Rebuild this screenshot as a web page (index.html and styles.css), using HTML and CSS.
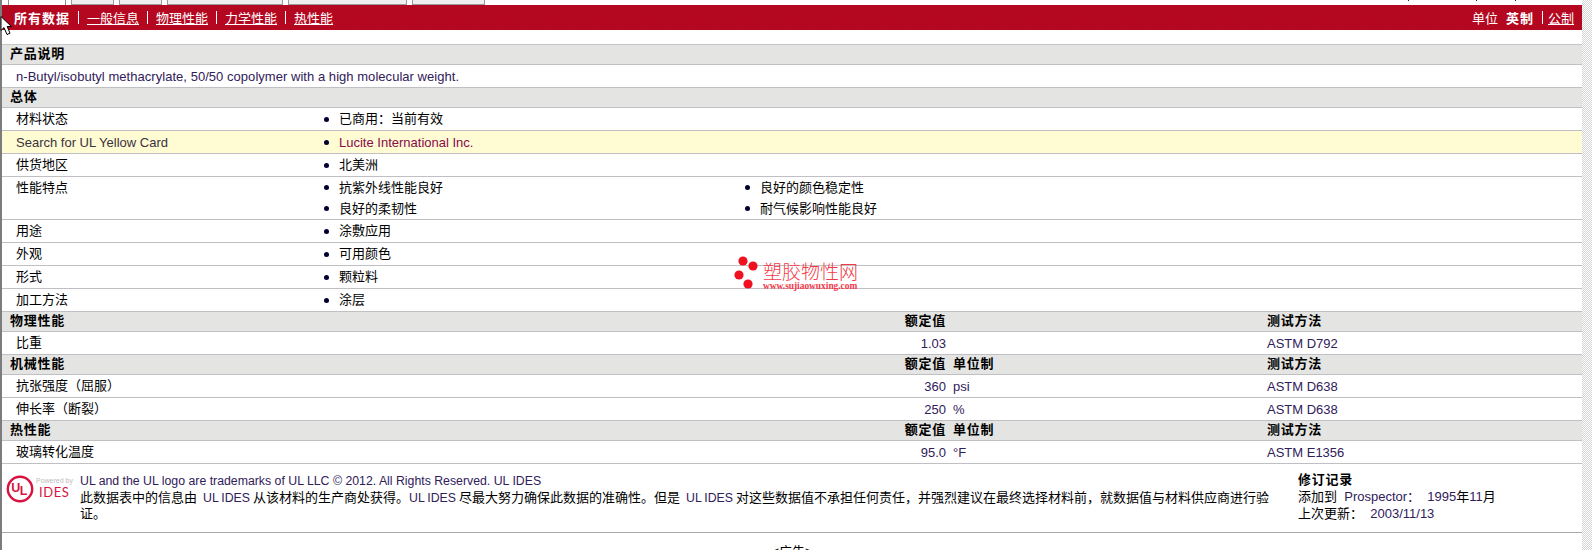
FILE: index.html
```html
<!DOCTYPE html>
<html lang="zh">
<head>
<meta charset="utf-8">
<title>材料数据表</title>
<link rel="stylesheet" href="styles.css">
</head>
<body>
<div class="page">
  <div class="edge"></div>
  <main class="main">
    <div class="tabs">
      <span class="tab tab-a"></span>
      <span class="tab tab-b"></span>
      <span class="tab tab-c"></span>
      <span class="tab tab-d"></span>
      <span class="tab tab-e"></span>
      <span class="tab tab-f"></span>
      <span class="mark mark-a"></span>
      <span class="mark mark-b"></span>
      <span class="mark mark-c"></span>
    </div>
    <nav class="redbar">
      <div class="navlist">
        <b>所有数据</b><i class="pipe"></i><a href="#">一般信息</a><i class="pipe"></i><a href="#">物理性能</a><i class="pipe"></i><a href="#">力学性能</a><i class="pipe"></i><a href="#">热性能</a>
      </div>
      <div class="units">
        <span>单位</span><b>英制</b><i class="pipe"></i><a href="#">公制</a>
      </div>
    </nav>

    <section class="sheet">
      <div class="head">产品说明</div>
      <div class="row"><span class="label latin desc">n-Butyl/isobutyl methacrylate, 50/50 copolymer with a high molecular weight.</span></div>

      <div class="head">总体</div>
      <div class="row info"><span class="label">材料状态</span><ul class="bul"><li>已商用：当前有效</li></ul></div>
      <div class="row info yellow"><span class="label latin">Search for UL Yellow Card</span><ul class="bul"><li class="link">Lucite International Inc.</li></ul></div>
      <div class="row info"><span class="label">供货地区</span><ul class="bul"><li>北美洲</li></ul></div>
      <div class="row info tall"><span class="label">性能特点</span>
        <ul class="bul"><li>抗紫外线性能良好</li><li>良好的颜色稳定性</li><li>良好的柔韧性</li><li>耐气候影响性能良好</li></ul></div>
      <div class="row info"><span class="label">用途</span><ul class="bul"><li>涂敷应用</li></ul></div>
      <div class="row info"><span class="label">外观</span><ul class="bul"><li>可用颜色</li></ul></div>
      <div class="row info"><span class="label">形式</span><ul class="bul"><li>颗粒料</li></ul></div>
      <div class="row info"><span class="label">加工方法</span><ul class="bul"><li>涂层</li></ul></div>

      <div class="head data"><span>物理性能</span><span class="val">额定值</span><span></span><span>测试方法</span></div>
      <div class="row data"><span class="label">比重</span><span class="val latin">1.03</span><span></span><span class="latin">ASTM D792</span></div>

      <div class="head data"><span>机械性能</span><span class="val">额定值</span><span>单位制</span><span>测试方法</span></div>
      <div class="row data"><span class="label">抗张强度（屈服）</span><span class="val latin">360</span><span class="latin">psi</span><span class="latin">ASTM D638</span></div>
      <div class="row data"><span class="label">伸长率（断裂）</span><span class="val latin">250</span><span class="latin">%</span><span class="latin">ASTM D638</span></div>

      <div class="head data"><span>热性能</span><span class="val">额定值</span><span>单位制</span><span>测试方法</span></div>
      <div class="row data"><span class="label">玻璃转化温度</span><span class="val latin">95.0</span><span class="latin">°F</span><span class="latin">ASTM E1356</span></div>
    </section>

    <footer class="foot">
      <div class="logo">
        <svg class="ul" viewBox="0 0 28 28" width="28" height="28" aria-hidden="true">
          <circle cx="14" cy="14" r="12.2" fill="none" stroke="#d8133f" stroke-width="2.4"/>
          <text class="ul-t" x="9.8" y="16.5">U</text>
          <text class="ul-t" x="17.6" y="20">L</text>
        </svg>
        <div class="logo-words"><span class="powered">Powered by</span><span class="ides">IDES</span></div>
      </div>
      <div class="legal">
        <p class="latin">UL and the UL logo are trademarks of UL LLC © 2012. All Rights Reserved. UL IDES</p>
        <p class="legal-body">此数据表中的信息由 <span class="latin">&nbsp;UL IDES</span> 从该材料的生产商处获得。<span class="latin">UL IDES</span> 尽最大努力确保此数据的准确性。但是 <span class="latin">&nbsp;UL IDES</span> 对这些数据值不承担任何责任，并强烈建议在最终选择材料前，就数据值与材料供应商进行验证。</p>
      </div>
      <div class="rev">
        <b>修订记录</b>
        <p>添加到 <span class="latin">&nbsp;Prospector：&nbsp; 1995</span>年<span class="latin">11</span>月</p>
        <p>上次更新：<span class="latin">&nbsp; 2003/11/13</span></p>
      </div>
    </footer>
    <div class="ad">&lt;广告&gt;</div>
  </main>
  <div class="strip"></div>

  <div class="watermark">
    <svg class="wm-dots" viewBox="0 0 26 34" width="26" height="34" aria-hidden="true">
      <circle cx="9" cy="5" r="4.6"/><circle cx="19" cy="10" r="4.6"/><circle cx="5" cy="19" r="4.6"/><circle cx="14" cy="28" r="4.6"/>
    </svg>
    <div class="wm-text"><span class="wm-cn">塑胶物性网</span><span class="wm-url">www.sujiaowuxing.com</span></div>
  </div>

  <svg class="cursor" viewBox="0 0 12 20" width="12" height="20" aria-hidden="true">
    <path d="M1 .5V14.5L4 11.6L7 18.5L10 17.2L7.2 10.5H11.4Z" fill="#fff" stroke="#000" stroke-width="1"/>
  </svg>
</div>
</body>
</html>
```

FILE: styles.css
```css
* { box-sizing: border-box; }
html, body { margin: 0; padding: 0; background: #fff; }
body {
  font-family: "Liberation Sans", "Noto Sans CJK SC", sans-serif;
  font-size: 13px;
  color: #000;
}
p, ul { margin: 0; padding: 0; }
a { color: inherit; }

.page { position: relative; display: flex; width: 1592px; height: 550px; overflow: hidden; }
.edge { flex: 0 0 2px; background: #7c7c7c; }
.main { flex: 0 0 1580px; width: 1580px; }
.strip {
  flex: 0 0 10px;
  background-color: #fff;
  background-image: conic-gradient(#d4d4d4 25%, #fff 0 50%, #d4d4d4 0 75%, #fff 0);
  background-size: 2px 2px;
}

.tabs { display: flex; height: 5px; padding-left: 6px; gap: 5px; }
.tab { height: 5px; background: #efefef; border: 1px solid #9a9a9a; border-top: 0; }
.tab-a { width: 58px; background: #fff; border-color: #fff #8f8f8f; border-bottom: 0; }
.tab-b { width: 43px; }
.tab-c { width: 43px; }
.tab-d { width: 116px; }
.tab-e { width: 119px; }
.tab-f { width: 73px; }
.mark { width: 1px; height: 1px; background: #222; }
.mark-a { margin-left: 918px; }
.mark-b { margin-left: 62px; }
.mark-c { margin-left: 33px; }

.redbar {
  display: flex;
  justify-content: space-between;
  align-items: center;
  height: 25px;
  padding: 0 8px 0 12px;
  color: #fff;
  background-color: #b5071f;
  background-image: radial-gradient(circle, #a90a22 .6px, transparent .7px);
  background-size: 3px 3px;
}
.redbar b { letter-spacing: 1px; }
.navlist, .units { display: flex; align-items: center; gap: 8px; }
.units .pipe { margin-right: -3px; }
.pipe { display: block; width: 1px; height: 13px; background: #fff; }

.sheet { margin-top: 14px; border-top: 1px solid #c6c6c6; }
.head, .row { border-bottom: 1px solid #bfbfc4; }
.head {
  height: 20px;
  line-height: 18px;
  padding-left: 8px;
  font-weight: 700;
  letter-spacing: .75px;
  background-color: #e4e4e2;
  background-image: radial-gradient(circle, #ececea .6px, transparent .7px);
  background-size: 4px 6px;
}
.row { height: 23px; line-height: 22px; padding-left: 14px; }
.latin { color: #30205a; }
.row .latin { padding-top: 1px; }
.desc { letter-spacing: .04px; }
.label { display: block; }
.yellow { background: #fffbd3; }
.yellow .latin { color: #3a3340; }

.info { display: grid; grid-template-columns: 308px 1fr; }
.tall { height: 43px; }
.bul { display: grid; grid-template-columns: 421px 421px; list-style: none; }
.bul li { display: flex; align-items: center; gap: 10px; height: 22px; }
.tall .bul li { height: 21px; }
.bul li::before {
  content: "";
  flex: 0 0 5px;
  width: 5px;
  height: 5px;
  border-radius: 50%;
  background: #000030;
}
.bul .link { color: #8a0a4c; padding-top: 1px; }

.data { display: grid; }
.head.data { grid-template-columns: 890px 46px 321px 320px; }
.row.data { grid-template-columns: 884px 46px 321px 320px; }
.val { text-align: right; }
.data > :nth-child(3) { padding-left: 7px; }

.foot {
  display: grid;
  grid-template-columns: 78px 1195px 1fr;
  height: 69px;
  border-bottom: 1px solid #aaa;
}
.logo { display: flex; padding: 11px 0 0 4px; gap: 2px; }
.ul { flex: 0 0 28px; }
.ul-t { font-family: "Liberation Sans", sans-serif; font-weight: 700; font-size: 12.5px; text-anchor: middle; fill: #d8133f; }
.logo-words { display: flex; flex-direction: column; }
.powered { font-size: 7px; line-height: 10px; color: #bdbdbd; white-space: nowrap; margin-top: 1px; }
.ides { font-family: "Lato", sans-serif; font-size: 13px; line-height: 13px; letter-spacing: .6px; color: #d8133f; margin-left: 3px; }
.legal { padding-top: 10px; line-height: 15.5px; }
.legal-body { word-spacing: -.5px; }
.legal .latin { font-size: 12.3px; }
.rev { padding: 7px 0 0 23px; line-height: 17px; }
.rev b { display: block; letter-spacing: .75px; }
.ad { padding-top: 11px; text-align: center; line-height: 16px; }

.watermark { position: absolute; left: 734px; top: 256px; display: flex; gap: 3px; }
.wm-dots { fill: #ef1020; }
.wm-text { display: flex; flex-direction: column; padding-top: 8px; color: #f2394a; }
.wm-cn { font-size: 19px; line-height: 18px; font-weight: 300; white-space: nowrap; }
.wm-url { font-family: "Liberation Serif", serif; font-size: 9.4px; line-height: 8px; font-weight: 700; white-space: nowrap; }
.cursor { position: absolute; left: 0; top: 16px; }
```
